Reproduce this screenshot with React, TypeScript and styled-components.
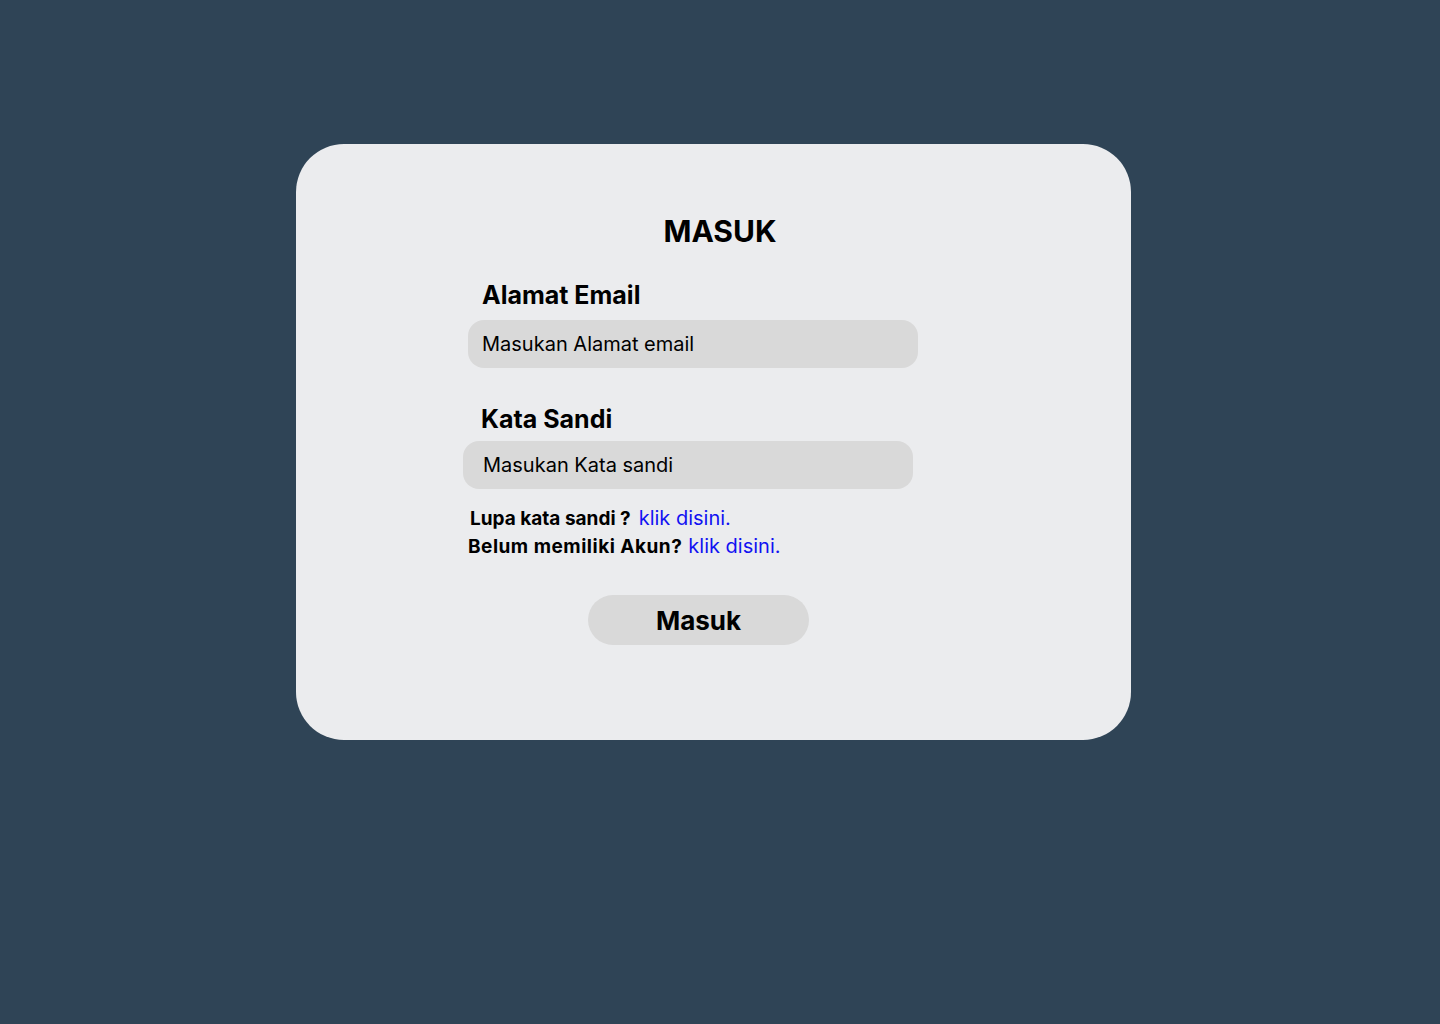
import React from "react";
import styled, { createGlobalStyle } from "styled-components";

const GlobalStyle = createGlobalStyle`
  html, body {
    margin: 0;
    padding: 0;
    background: #2F4456;
    font-family: Inter, "Noto Sans", sans-serif;
  }
  body {
    min-height: 1024px;
  }
`;

const Page = styled.div`
  width: 1440px;
  min-height: 1024px;
  padding: 144px 0 0 296px;
  box-sizing: border-box;
`;

const Card = styled.div`
  width: 835px;
  height: 596px;
  background: #EBECEE;
  border-radius: 48px;
  box-sizing: border-box;
  padding: 69px 0 0 0;
  display: flex;
  flex-direction: column;
`;

const Title = styled.h1`
  margin: 0 0 32px 0;
  padding-left: 13px;
  text-align: center;
  font-size: 30px;
  line-height: 36px;
  font-weight: 700;
  color: #000;
`;

const Form = styled.form`
  display: flex;
  flex-direction: column;
  align-items: flex-start;
  padding-left: 167px;
`;

const Label = styled.label<{ $indent: number; $top: number }>`
  display: block;
  margin: ${(p) => p.$top}px 0 0 ${(p) => p.$indent}px;
  font-size: 25px;
  line-height: 29px;
  font-weight: 700;
  color: #000;
`;

const Input = styled.input<{ $indent: number; $pad: number; $top: number }>`
  display: block;
  width: 450px;
  height: 48px;
  margin: ${(p) => p.$top}px 0 0 ${(p) => p.$indent}px;
  padding: 0 0 0 ${(p) => p.$pad}px;
  box-sizing: border-box;
  border: none;
  outline: none;
  border-radius: 16px;
  background: #D9D9D9;
  font-family: Inter, "Noto Sans", sans-serif;
  font-size: 20px;
  color: #000;
  &::placeholder {
    color: #000;
    opacity: 1;
  }
`;

const HintRow = styled.div<{ $indent: number; $top: number }>`
  display: flex;
  align-items: baseline;
  margin: ${(p) => p.$top}px 0 0 ${(p) => p.$indent}px;
  height: 28px;
  line-height: 28px;
`;

const HintText = styled.span<{ $spacing?: number }>`
  font-size: 19px;
  font-weight: 700;
  letter-spacing: ${(p) => p.$spacing ?? 0}px;
  color: #000;
`;

const HintLink = styled.a<{ $gap: number }>`
  margin-left: ${(p) => p.$gap}px;
  font-size: 20px;
  font-weight: 400;
  color: #1212F2;
  text-decoration: none;
  cursor: pointer;
`;

const SubmitButton = styled.button`
  align-self: flex-start;
  margin: 35px 0 0 125px;
  width: 221px;
  height: 50px;
  border: none;
  border-radius: 25px;
  background: #D9D9D9;
  font-family: Inter, "Noto Sans", sans-serif;
  font-size: 26px;
  font-weight: 700;
  color: #000;
  cursor: pointer;
`;

export default function App() {
  return (
    <>
      <GlobalStyle />
      <Page>
        <Card>
          <Title>MASUK</Title>
          <Form onSubmit={(e) => e.preventDefault()}>
            <Label $indent={19} $top={0} htmlFor="email">
              Alamat Email
            </Label>
            <Input
              id="email"
              type="text"
              placeholder="Masukan Alamat email"
              $indent={5}
              $pad={14}
              $top={10}
            />
            <Label $indent={18} $top={37} htmlFor="password">
              Kata Sandi
            </Label>
            <Input
              id="password"
              type="text"
              placeholder="Masukan Kata sandi"
              $indent={0}
              $pad={20}
              $top={7}
            />
            <HintRow $indent={7} $top={15}>
              <HintText>Lupa kata sandi ?</HintText>
              <HintLink $gap={8}>klik disini.</HintLink>
            </HintRow>
            <HintRow $indent={5} $top={0}>
              <HintText $spacing={0.5}>Belum memiliki Akun?</HintText>
              <HintLink $gap={6}>klik disini.</HintLink>
            </HintRow>
            <SubmitButton type="submit">Masuk</SubmitButton>
          </Form>
        </Card>
      </Page>
    </>
  );
}
